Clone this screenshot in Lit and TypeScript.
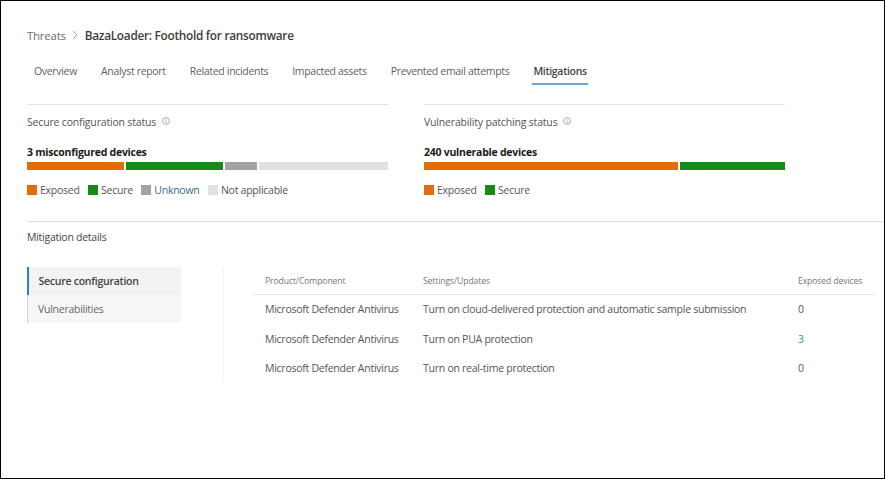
import { LitElement, html, css } from "lit";
import { customElement } from "lit/decorators.js";

const info = html`<svg class="info" viewBox="0 0 8 8" width="8" height="8"><circle cx="4" cy="4" r="3.4" fill="none" stroke="#8a8a8a" stroke-width=".7"/><path d="M4 3.4V6M4 2v.8" stroke="#8a8a8a" stroke-width=".7"/></svg>`;

@customElement("app-root")
export class AppRoot extends LitElement {
  static styles = css`
    :host { display: block; width: 885px; height: 479px; font-family: "Open Sans", "Noto Sans", sans-serif; color: #3b3a39; font-size: 10.5px; letter-spacing: -0.26px; }
    * { box-sizing: border-box; }
    .frame { width: 885px; height: 479px; border: 1px solid #000; background: #fff; padding-top: 24px; overflow: hidden; }
    .crumb { display: flex; align-items: center; height: 20px; margin-left: 26px; font-size: 11.5px; }
    .crumb .root { color: #6a6a6a; }
    .crumb svg { margin: 0 6px 0 5px; }
    .crumb b { font-weight: 600; color: #3f3c3a; font-size: 11.8px; letter-spacing: -0.27px; }
    .tabs { display: flex; height: 32px; margin: 13px 0 0 33px; }
    .tab { margin-right: 24px; padding-top: 6px; color: #5f5f5f; white-space: nowrap; letter-spacing: -0.32px; }
    .tab.on { font-weight: 600; color: #444; height: 27px; border-bottom: 2px solid #6aa6d6; padding: 6px 1px 0; margin-left: -1px; }
    .status { display: flex; gap: 36px; margin: 14px 0 0 26px; height: 117px; }
    .col { width: 361px; border-top: 1px solid #e3e3e3; }
    .col h3 { margin: 0; font-weight: 400; font-size: 10.5px; letter-spacing: -0.18px; height: 16px; margin-top: 9px; color: #555; display: flex; align-items: center; }
    .info { margin: -3px 0 0 6px; }
    .count { font-weight: 700; color: #1a1a1a; margin-top: 15px; height: 15px; line-height: 15px; }
    .bar { display: flex; gap: 2px; height: 8px; margin-top: 2px; }
    .bar span { display: block; height: 100%; }
    .legend { display: flex; gap: 8.5px; margin-top: 14px; height: 12px; align-items: center; color: #555; }
    .legend div { display: flex; align-items: center; gap: 3px; }
    .sw { width: 10px; height: 10px; }
    .o { background: #e36c0a; } .g { background: #188a18; } .u { background: #a3a3a3; } .n { background: #e2e1df; }
    .blue { color: #3a6b8c; }
    .rule { height: 1px; background: #dedede; margin-left: 26px; }
    .md { margin: 8px 0 0 26px; height: 15px; line-height: 15px; color: #444; }
    .details { display: flex; margin: 22px 0 0 26px; }
    .nav { width: 154px; height: 56px; background: #f6f6f6; border-left: 1px solid #d0d0d0; }
    .nav div { height: 28px; line-height: 28px; padding-left: 10px; color: #666; }
    .nav .on { font-weight: 600; color: #444; background: #f3f3f3; border-left: 2px solid #2f7fc1; margin-left: -1px; padding-left: 9.5px; }
    .vline { width: 1px; height: 115px; background: #f4f4f4; margin-left: 42px; }
    table { border-collapse: collapse; margin-left: 30px; width: 620px; table-layout: fixed; }
    th { text-align: left; font-weight: 400; font-size: 8.6px; color: #777; height: 27px; border-bottom: 1px solid #e6e6e6; padding: 1px 0 0 11px; letter-spacing: -0.1px; }
    td { height: 29px; padding: 0 0 0 11px; color: #555; white-space: nowrap; }
    tr.edge td { height: 30px; }
    .link { color: #3f8fb5; }
  `;

  private bar(segs: [string, number][]) {
    return html`<div class="bar">${segs.map(([c, w]) => html`<span class=${c} style="width:${w}px"></span>`)}</div>`;
  }

  render() {
    return html`<div class="frame">
      <div class="crumb"><span class="root">Threats</span>
        <svg width="8" height="10" viewBox="0 0 8 10"><path d="M2 1l4 4-4 4" fill="none" stroke="#999" stroke-width=".9"/></svg>
        <b>BazaLoader: Foothold for ransomware</b></div>
      <div class="tabs">
        <div class="tab">Overview</div><div class="tab">Analyst report</div><div class="tab">Related incidents</div>
        <div class="tab">Impacted assets</div><div class="tab">Prevented email attempts</div><div class="tab on">Mitigations</div>
      </div>
      <div class="status">
        <div class="col">
          <h3>Secure configuration status ${info}</h3>
          <div class="count">3 misconfigured devices</div>
          ${this.bar([["o", 97], ["g", 97], ["u", 32], ["n", 129]])}
          <div class="legend">
            <div><span class="sw o"></span>Exposed</div><div><span class="sw g"></span>Secure</div>
            <div><span class="sw u"></span><span class="blue">Unknown</span></div><div><span class="sw n"></span>Not applicable</div>
          </div>
        </div>
        <div class="col">
          <h3>Vulnerability patching status ${info}</h3>
          <div class="count">240 vulnerable devices</div>
          ${this.bar([["o", 254], ["g", 105]])}
          <div class="legend"><div><span class="sw o"></span>Exposed</div><div><span class="sw g"></span>Secure</div></div>
        </div>
      </div>
      <div class="rule"></div>
      <div class="md">Mitigation details</div>
      <div class="details">
        <div class="nav"><div class="on">Secure configuration</div><div>Vulnerabilities</div></div>
        <div class="vline"></div>
        <table>
          <colgroup><col style="width:158px"/><col style="width:375px"/><col/></colgroup>
          <thead><tr><th>Product/Component</th><th>Settings/Updates</th><th>Exposed devices</th></tr></thead>
          <tbody>
            <tr class="edge"><td>Microsoft Defender Antivirus</td><td>Turn on cloud-delivered protection and automatic sample submission</td><td>0</td></tr>
            <tr><td>Microsoft Defender Antivirus</td><td>Turn on PUA protection</td><td class="link">3</td></tr>
            <tr class="edge"><td>Microsoft Defender Antivirus</td><td>Turn on real-time protection</td><td>0</td></tr>
          </tbody>
        </table>
      </div>
    </div>`;
  }
}
